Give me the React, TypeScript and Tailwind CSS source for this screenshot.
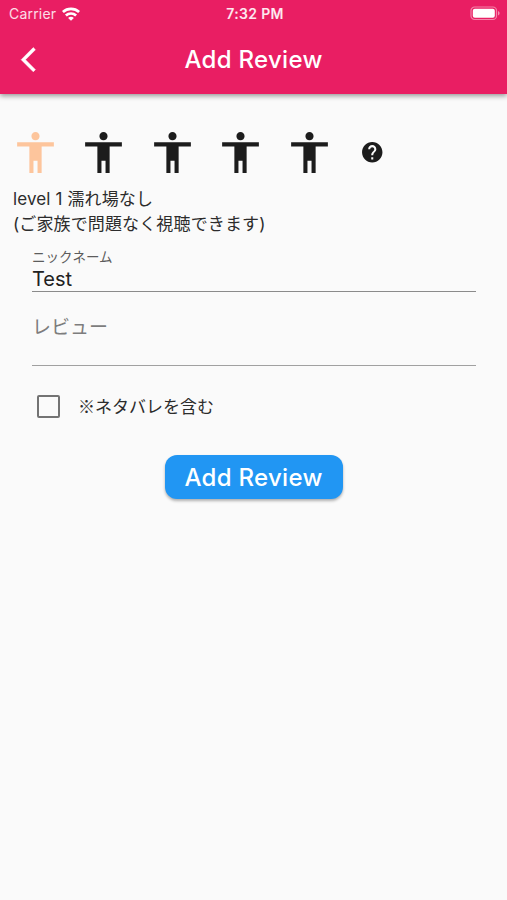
import { useState } from "react";

const LEVELS = [1, 2, 3, 4, 5];

function WifiIcon() {
  return (
    <svg className="w-[18px] h-[14px]" viewBox="0 0 18 14" fill="none" stroke="white" strokeWidth="2.7">
      <path d="M.9 5C5.4.8 12.6.8 17.1 5" />
      <path d="M3.9 8.5c2.9-2.7 7.3-2.7 10.2 0" />
      <path d="M9 13.8 6.1 10.9c1.7-1.5 4.1-1.5 5.8 0z" fill="white" stroke="none" />
    </svg>
  );
}

function BatteryIcon() {
  return (
    <svg className="w-[31px] h-[15px]" viewBox="0 0 31 15">
      <rect x="1" y="1" width="25.5" height="12.5" rx="3.6" fill="none" stroke="white" strokeOpacity=".45" strokeWidth="1.2" />
      <rect x="2.8" y="2.8" width="22" height="8.9" rx="2" fill="white" />
      <path d="M28 5v4.5c2.1-.9 2.1-3.6 0-4.5z" fill="white" fillOpacity=".5" />
    </svg>
  );
}

function PersonIcon() {
  return (
    <svg className="w-[49px] h-[49px]" viewBox="0 0 24 24" fill="currentColor">
      <path d="M12 2c1.1 0 2 .9 2 2s-.9 2-2 2-2-.9-2-2 .9-2 2-2zm9 7h-6v13h-2v-6h-2v6H9V9H3V7h18v2z" />
    </svg>
  );
}

function StatusBar() {
  return (
    <div className="h-[27px] grid grid-cols-3 items-center pl-[9px] pr-[6px] text-[14px] leading-none">
      <div className="flex items-center gap-[6px] tracking-[0.2px]">
        <span className="w-[47px] pt-px whitespace-nowrap text-white/85">Carrier</span>
        <WifiIcon />
      </div>
      <span className="pt-px text-center font-semibold tracking-[0.35px] text-white/90">7:32 PM</span>
      <div className="flex justify-end">
        <BatteryIcon />
      </div>
    </div>
  );
}

export default function App() {
  const [level, setLevel] = useState(1);
  const [spoiler, setSpoiler] = useState(false);

  return (
    <div className="min-h-[900px] bg-[#fafafa] text-[#212121] font-['Inter','Noto_Sans_CJK_JP',sans-serif]">
      {/* App bar */}
      <header className="h-[94px] bg-[#e91e63] text-white shadow-[0_2px_5px_rgba(0,0,0,0.4)]">
        <StatusBar />
        <div className="h-[66px] grid grid-cols-[60px_1fr_60px] items-center">
          <button aria-label="Back" className="pl-[14px]">
            <svg className="w-[29.4px] h-[29.4px]" viewBox="0 0 24 24" fill="currentColor" stroke="currentColor" strokeWidth=".4">
              <path d="M17.51 3.87L15.73 2.1 5.84 12l9.9 9.9 1.77-1.77L9.38 12l8.13-8.13z" />
            </svg>
          </button>
          <h1 className="text-center text-[24px] leading-none font-medium tracking-[0.3px]">Add Review</h1>
        </div>
      </header>

      <main>
        {/* Level picker */}
        <div className="flex items-center pt-[34px] pl-[10.5px]">
          {LEVELS.map((n) => (
            <button
              key={n}
              aria-label={`level ${n}`}
              onClick={() => setLevel(n)}
              className={`mr-[19.5px] ${n <= level ? "text-[#fdc59c]" : "text-[#1c1c1c]"}`}
            >
              <PersonIcon />
            </button>
          ))}
          <button aria-label="Help" className="ml-[7px]">
            <svg className="w-[24.5px] h-[24.5px]" viewBox="0 0 24 24" fill="#1c1c1c">
              <path d="M12 2C6.48 2 2 6.48 2 12s4.48 10 10 10 10-4.48 10-10S17.52 2 12 2zm1 17h-2v-2h2v2zm2.07-7.75l-.9.92C13.45 12.9 13 13.5 13 15h-2v-.5c0-1.1.45-2.1 1.17-2.83l1.24-1.26c.37-.36.59-.86.59-1.41 0-1.1-.9-2-2-2s-2 .9-2 2H8c0-2.21 1.79-4 4-4s4 1.79 4 4c0 .88-.36 1.68-.93 2.25z" />
            </svg>
          </button>
        </div>

        <p className="pt-[10px] pl-[13px] text-[17px] leading-[24.5px] tracking-[0.13px] text-[#2c2c2c]">
          level 1 濡れ場なし
          <br />
          (ご家族で問題なく視聴できます)
        </p>

        <form className="pl-[32px] pr-[31px]" onSubmit={(e) => e.preventDefault()}>
          <label className="block pt-[13px]">
            <span className="block text-[13.5px] leading-[16px] text-[#5c5c5c]">ニックネーム</span>
            <input
              defaultValue="Test"
              className="block w-full h-[27px] pt-[2px] border-b border-[#8b8b8b] bg-transparent text-[20px] outline-none"
            />
          </label>
          <textarea
            placeholder="レビュー"
            className="block w-full h-[74px] pt-[22px] resize-none border-b border-[#a0a0a0] bg-transparent text-[19px] leading-[28px] placeholder:text-[#7d7d7d] outline-none"
          />
          <label className="flex items-center pt-[28px] pl-[5px]">
            <input
              type="checkbox"
              checked={spoiler}
              onChange={(e) => setSpoiler(e.target.checked)}
              className="appearance-none w-[23px] h-[23px] border-[2.5px] border-[#737373] rounded-[2px] checked:bg-[#2196f3]"
            />
            <span className="ml-[18px] text-[17px] leading-[24px] text-[#2c2c2c] font-['Noto_Sans_CJK_JP',sans-serif]">
              ※ネタバレを含む
            </span>
          </label>
        </form>

        <div className="flex justify-center pt-[37px]">
          <button className="w-[178px] h-[44px] pt-px rounded-[12px] bg-[#2196f3] text-white text-[24px] leading-none font-medium tracking-[0.3px] shadow-[0_2px_3px_rgba(0,0,0,0.3)]">
            Add Review
          </button>
        </div>
      </main>
    </div>
  );
}
